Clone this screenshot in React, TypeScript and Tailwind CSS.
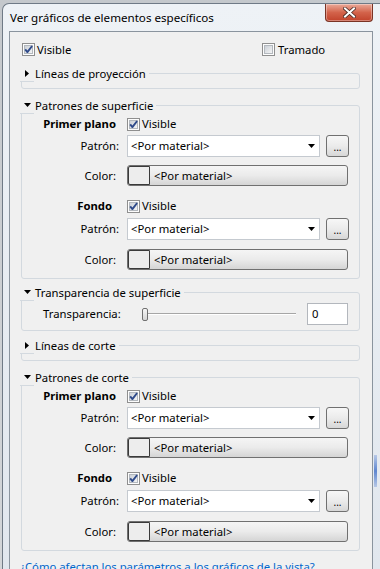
import React from "react";

function CheckBox({ checked }: { checked: boolean }) {
  return (
    <svg width="13" height="13" viewBox="0 0 13 13" className="shrink-0">
      <defs>
        <linearGradient id="cbInner" x1="0" y1="0" x2="1" y2="1">
          <stop offset="0" stopColor="#c9ced5" />
          <stop offset="1" stopColor="#f7f7f7" />
        </linearGradient>
      </defs>
      <rect x="0.5" y="0.5" width="12" height="12" fill="#fdfdfd" stroke="#8f8f8f" />
      <rect x="2.5" y="2.5" width="8" height="8" fill="url(#cbInner)" stroke="#b3b8be" />
      {checked && (
        <path
          d="M3.2 6.4 L5.4 9.1 L10.1 3"
          fill="none"
          stroke="#2f4a8a"
          strokeWidth="1.9"
          strokeLinejoin="round"
        />
      )}
    </svg>
  );
}

function DownTri() {
  return (
    <svg width="7" height="4" viewBox="0 0 7 4" className="shrink-0">
      <path d="M0 0H7L3.5 4Z" fill="#000" />
    </svg>
  );
}

function RightTri() {
  return (
    <svg width="4" height="7" viewBox="0 0 4 7" className="shrink-0">
      <path d="M0 0L4 3.5L0 7Z" fill="#000" />
    </svg>
  );
}

function Group({
  title,
  open,
  className,
  children,
}: {
  title: string;
  open: boolean;
  className: string;
  children?: React.ReactNode;
}) {
  return (
    <div className={`ml-[11px] mr-[12px] rounded-[3px] border border-[#d3d9df] ${className}`}>
      <div className="-ml-[2px] -mt-[9px] flex h-[17px] w-fit">
        <div className="flex w-[14px] items-center justify-center border-b border-[#d3d9df] bg-[#f0f0f0]">
          {open ? <DownTri /> : <RightTri />}
        </div>
        <div className="flex items-center bg-[#f0f0f0] pl-[1px] pr-[3px] leading-none">{title}</div>
      </div>
      {children}
    </div>
  );
}

function HeadRow({ label, pr, className }: { label: string; pr: string; className: string }) {
  return (
    <div className={`flex h-[16px] items-center ${className}`}>
      <div className={`w-[105px] text-right font-bold leading-none ${pr}`}>{label}</div>
      <CheckBox checked />
      <span className="ml-[2px] leading-none">Visible</span>
    </div>
  );
}

function PatternRow({ className }: { className: string }) {
  return (
    <div className={`flex h-[22px] items-center ${className}`}>
      <div className="w-[105px] pr-[8px] text-right leading-none">Patrón:</div>
      <div className="flex h-full w-[193px] items-center justify-between border border-[#c5cad0] bg-white pl-[3px] pr-[4px]">
        <span className="leading-none">&lt;Por material&gt;</span>
        <DownTri />
      </div>
      <div className="ml-[6px] flex h-full w-[23px] items-end justify-center rounded-[3px] border border-[#707070] bg-gradient-to-b from-[#f7f7f7] via-[#ebebeb] to-[#d7d7d7] pb-[4px] text-[10px] leading-none">
        ...
      </div>
    </div>
  );
}

function ColorRow({ className }: { className: string }) {
  return (
    <div className={`flex h-[21px] items-center ${className}`}>
      <div className="w-[105px] pr-[11px] text-right leading-none">Color:</div>
      <div className="flex h-full w-[221px] items-stretch rounded-[3px] border border-[#707070] bg-gradient-to-b from-[#f5f5f5] via-[#ebebeb] to-[#d5d5d5]">
        <div className="w-[22px] rounded-l-[2px] border border-[#3a3a3a] bg-[#ededed]" />
        <div className="flex items-center pl-[4px] leading-none">&lt;Por material&gt;</div>
      </div>
    </div>
  );
}

function PatternBlock() {
  return (
    <>
      <HeadRow label="Primer plano" pr="pr-[11px]" className="mt-[2px]" />
      <PatternRow className="mt-[3px]" />
      <ColorRow className="mt-[8px]" />
      <HeadRow label="Fondo" pr="pr-[15px]" className="mt-[12px]" />
      <PatternRow className="mt-[4px]" />
      <ColorRow className="mt-[9px]" />
    </>
  );
}

export default function App() {
  return (
    <div className="h-[569px] w-[380px] overflow-hidden bg-gradient-to-b from-[#c4c8cc] to-[#d3d6d9] pl-[2px] pt-[3px] font-['Noto_Sans',sans-serif] text-[11.3px] text-black">
      <div className="flex h-full flex-col rounded-tl-[7px] border-l border-t border-[#6f7a86] bg-gradient-to-b from-[#eef2f6] to-[#e1e7ee]">
        {/* title bar */}
        <div className="flex h-[27px] shrink-0">
          <div className="flex flex-1 items-center pl-[7px] text-[11.6px] leading-none">Ver gráficos de elementos específicos</div>
          <div className="mr-[7px] flex h-[18px] w-[48px] items-center justify-center rounded-b-[4px] border border-t-0 border-[#7a3325] bg-gradient-to-b from-[#eaa999] via-[#d3634b] to-[#c1422b] shadow-[inset_0_0_0_1px_rgba(255,255,255,0.35)]">
            <svg width="13" height="11" viewBox="0 0 13 11">
              <path d="M2 1.5 L11 9.5 M11 1.5 L2 9.5" stroke="#4a2a24" strokeWidth="3.6" strokeLinecap="square" />
              <path d="M2 1.5 L11 9.5 M11 1.5 L2 9.5" stroke="#ffffff" strokeWidth="2" strokeLinecap="square" />
            </svg>
          </div>
        </div>

        {/* body */}
        <div className="flex min-h-0 flex-1">
          <div className="ml-[6px] flex w-[364px] shrink-0 flex-col border-l border-r border-t border-[#8a949e] bg-[#f0f0f0]">
            {/* visible row */}
            <div className="mt-[11px] flex h-[13px] items-center pl-[12px]">
              <div className="flex w-[240px] items-center">
                <CheckBox checked />
                <span className="ml-[2px] leading-none">Visible</span>
              </div>
              <div className="flex items-center">
                <CheckBox checked={false} />
                <span className="ml-[3px] leading-none">Tramado</span>
              </div>
            </div>

            <Group title="Líneas de proyección" open={false} className="mt-[17px] pb-[6px]" />

            <Group title="Patrones de superficie" open className="mt-[16px] pb-[8px]">
              <PatternBlock />
            </Group>

            <Group title="Transparencia de superficie" open className="mt-[13px] pb-[5px]">
              <div className="mt-[2px] flex h-[22px] items-center pl-[21px]">
                <div className="w-[97px] leading-none">Transparencia:</div>
                <div className="flex w-[158px] items-center pl-[2px] pr-[2px]">
                  <div className="h-[13px] w-[6px] shrink-0 rounded-[2px] border border-[#707070] bg-gradient-to-b from-[#f6f6f6] to-[#d6d6d6]" />
                  <div className="h-[2px] flex-1 border-b border-t border-b-white border-t-[#a6a6a6]" />
                </div>
                <div className="ml-[9px] flex h-full w-[41px] items-center border border-[#b3b7bd] bg-white pl-[4px] leading-none">
                  0
                </div>
              </div>
            </Group>

            <Group title="Líneas de corte" open={false} className="mt-[14px] pb-[6px]" />

            <Group title="Patrones de corte" open className="mt-[16px] pb-[8px]">
              <PatternBlock />
            </Group>

            <div className="mt-[8px] pl-[10px] leading-[16px] text-[#0066cc]">
              ¿Cómo afectan los parámetros a los gráficos de la vista?
            </div>
          </div>

          {/* right frame strip */}
          <div className="flex flex-1 flex-col">
            <div className="ml-[1px] mt-[424px] h-[32px] w-[3px] bg-gradient-to-b from-[#b7c8e6] via-[#5f86cf] to-[#b7c8e6]" />
          </div>
        </div>
      </div>
    </div>
  );
}
